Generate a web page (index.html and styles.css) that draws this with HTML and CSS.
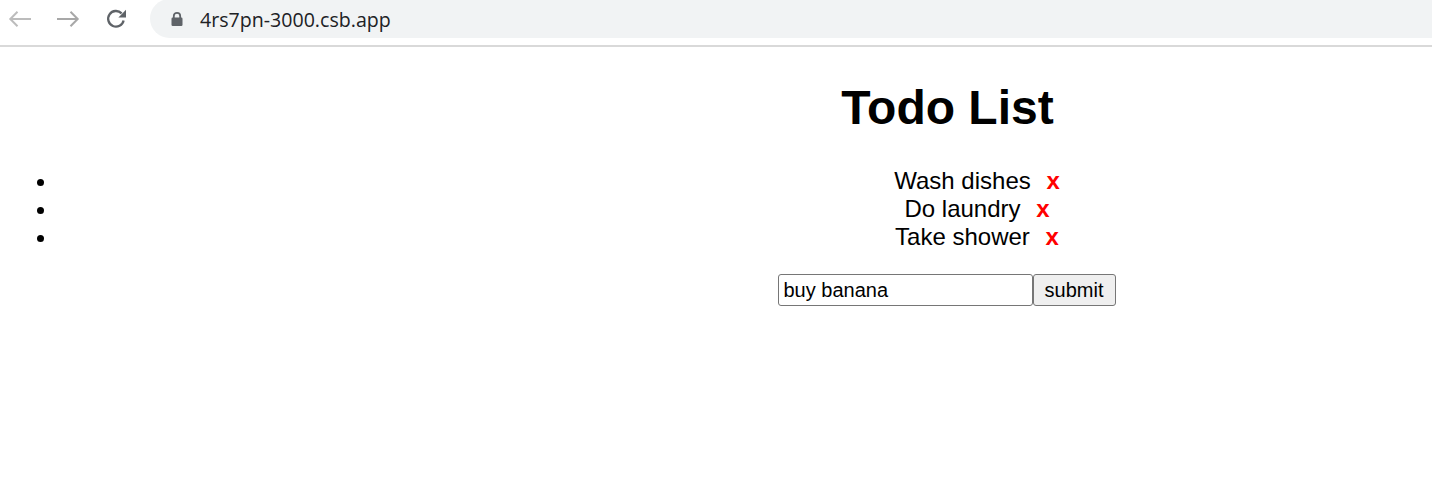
FILE: index.html
```html
<!DOCTYPE html>
<html lang="en">
<head>
<meta charset="utf-8">
<title>Todo List</title>
<link rel="stylesheet" href="styles.css">
</head>
<body>
<header class="toolbar">
  <span class="nav-btn nav-back">
    <svg width="24" height="24" viewBox="0 0 24 24"><path d="M23 12H2.5M9.5 4.8L2.3 12l7.2 7.2" fill="none" stroke="currentColor" stroke-width="2"/></svg>
  </span>
  <span class="nav-btn nav-fwd">
    <svg width="24" height="24" viewBox="0 0 24 24"><path d="M1 12h20.5M14.5 4.8l7.2 7.2-7.2 7.2" fill="none" stroke="currentColor" stroke-width="2"/></svg>
  </span>
  <span class="nav-btn nav-reload">
    <svg width="24" height="24" viewBox="0 0 24 24"><path d="M19.6 13.4A7.8 7.8 0 1 1 17.6 6.4" fill="none" stroke="currentColor" stroke-width="2.3"/><path d="M22 2.8v7.6h-7.6z" fill="currentColor"/></svg>
  </span>
  <div class="omnibox">
    <svg class="lock" width="14" height="16" viewBox="0 0 14 16"><path d="M3.8 7V5a3.2 3.2 0 0 1 6.4 0v2" fill="none" stroke="currentColor" stroke-width="1.8"/><rect x="1.5" y="6.6" width="11" height="8.4" rx="1.2" fill="currentColor"/></svg>
    <span class="url">4rs7pn-3000.csb.app</span>
  </div>
</header>
<main class="page">
  <h1 class="title">Todo List</h1>
  <ul class="todos">
    <li>Wash dishes <button class="del" type="button">x</button></li>
    <li>Do laundry <button class="del" type="button">x</button></li>
    <li>Take shower <button class="del" type="button">x</button></li>
  </ul>
  <form class="add-form">
    <input class="add-input" type="text" value="buy banana"><button class="add-btn" type="button">submit</button>
  </form>
</main>
</body>
</html>
```
FILE: styles.css
```css
html, body {
  margin: 0;
  padding: 0;
  overflow: hidden;
  background: #fff;
}

body {
  font-family: "Liberation Sans", Arial, sans-serif;
  color: #000;
}

.toolbar {
  display: flex;
  align-items: flex-start;
  height: 45px;
  border-bottom: 2px solid #d9d9d9;
  padding-left: 8px;
  box-sizing: content-box;
  background: #fff;
}

.nav-btn {
  display: flex;
  width: 24px;
  height: 24px;
  margin-top: 7px;
  margin-right: 24px;
}

.nav-back { color: #bcbcbc; }
.nav-fwd { color: #a8a8a8; }
.nav-reload { color: #5f6368; margin-right: 22px; }

.omnibox {
  flex: 1;
  display: flex;
  align-items: center;
  height: 39px;
  margin-top: -1px;
  background: #f1f3f4;
  border-radius: 20px 0 0 20px;
  padding-left: 20px;
}

.lock {
  color: #5f6368;
  margin-right: 16px;
  margin-top: 1px;
}

.url {
  font-family: "Open Sans", "Noto Sans", sans-serif;
  font-size: 19.6px;
  color: #202124;
  margin-top: 1px;
}

.page {
  width: 1871px;
  padding: 0 12px;
  text-align: center;
}

.title {
  font-size: 48px;
  font-weight: bold;
  margin: 33px 0 32px;
}

.todos {
  font-size: 24px;
  margin: 32px -22px 24px 0;
  padding-left: 46px;
}

.del {
  font-family: "Liberation Sans", Arial, sans-serif;
  font-size: 24px;
  font-weight: bold;
  color: #ff0000;
  background: none;
  border: none;
  padding: 0 9px;
  line-height: 1;
  cursor: pointer;
}

.add-form {
  display: flex;
  justify-content: center;
  margin-top: -1px;
  padding-right: 2px;
}

.add-input {
  box-sizing: border-box;
  width: 255px;
  height: 32px;
  border: 1px solid #767676;
  border-radius: 3px;
  padding: 0 5px;
  font-family: "Liberation Sans", Arial, sans-serif;
  font-size: 20px;
  color: #000;
}

.add-btn {
  box-sizing: border-box;
  width: 83px;
  height: 32px;
  border: 1px solid #767676;
  border-radius: 3px;
  background: #efefef;
  font-family: "Liberation Sans", Arial, sans-serif;
  font-size: 20px;
  color: #000;
  padding: 0;
}
```
